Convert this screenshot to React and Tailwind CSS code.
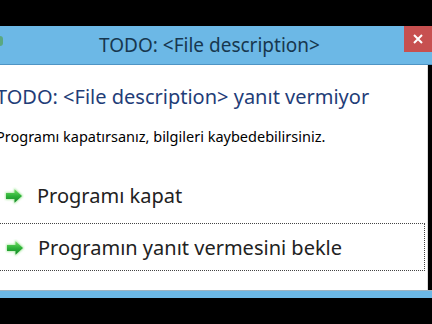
import React from 'react';

const Arrow = () => (
  <svg width="20" height="18" viewBox="0 0 20 18" className="shrink-0">
    <defs>
      <linearGradient id="ag" x1="0" y1="0" x2="0" y2="1">
        <stop offset="0" stopColor="#72de64" />
        <stop offset="0.5" stopColor="#2db239" />
        <stop offset="1" stopColor="#148526" />
      </linearGradient>
      <filter id="glow" x="-30%" y="-30%" width="160%" height="160%">
        <feGaussianBlur stdDeviation="1.2" />
      </filter>
    </defs>
    <path d="M1.5 5.5h8.5V1l9 8-9 8v-4.5H1.5z" fill="#9fe596" filter="url(#glow)" />
    <path d="M2 6h8.5V2.2L18 9l-7.5 6.8V12H2z" fill="url(#ag)" strokeLinejoin="round" />
  </svg>
);

const App = () => {
  return (
    <div className="w-[432px] h-[324px] bg-black overflow-hidden flex flex-col" style={{ fontFamily: '"Noto Sans", "Open Sans", sans-serif' }}>
      <div className="h-[26px] shrink-0" />
      {/* Title bar */}
      <div className="h-[39px] shrink-0 bg-[#6cb8e6] border-b border-[#4f94c4] flex items-start">
        <div className="w-[6px] h-[10px] mt-[10px] ml-[-3px] rounded-full bg-[#5aa880]" />
        <div className="flex-1 text-center text-[19px] leading-[38px] text-[#17374f] pl-[12px]">TODO: &lt;File description&gt;</div>
        <div className="w-[28px] h-[26px] bg-[#c75050] flex items-center justify-center">
          <svg width="10" height="10" viewBox="0 0 10 10">
            <path d="M1 1l8 8M9 1l-8 8" stroke="white" strokeWidth="2" />
          </svg>
        </div>
      </div>
      {/* Content */}
      <div className="flex-1 bg-white flex flex-col ml-[-4px] mr-[4px] border-r border-[#dcdcdc]">
        <div className="text-[20px] leading-[28px] text-[#1f3d78] mt-[18px]">TODO: &lt;File description&gt; yanıt vermiyor</div>
        <div className="text-[14.5px] leading-[18px] text-black mt-[16px]">Programı kapatırsanız, bilgileri kaybedebilirsiniz.</div>
        <div className="flex items-center gap-[13px] pl-[8px] h-[46px] mt-[28px] text-[20px] text-[#222]">
          <Arrow />
          <span>Programı kapat</span>
        </div>
        <div className="flex items-center gap-[13px] pl-[8px] pt-[2px] h-[48px] mt-[4px] mr-[2px] border border-dotted border-[#444] text-[20px] text-[#222]">
          <Arrow />
          <span>Programın yanıt vermesini bekle</span>
        </div>
      </div>
      <div className="h-[8px] shrink-0 bg-[#6cb8e6] border-t border-[#9fb4c2]" />
      <div className="h-[26px] shrink-0" />
    </div>
  );
};

export default App;
